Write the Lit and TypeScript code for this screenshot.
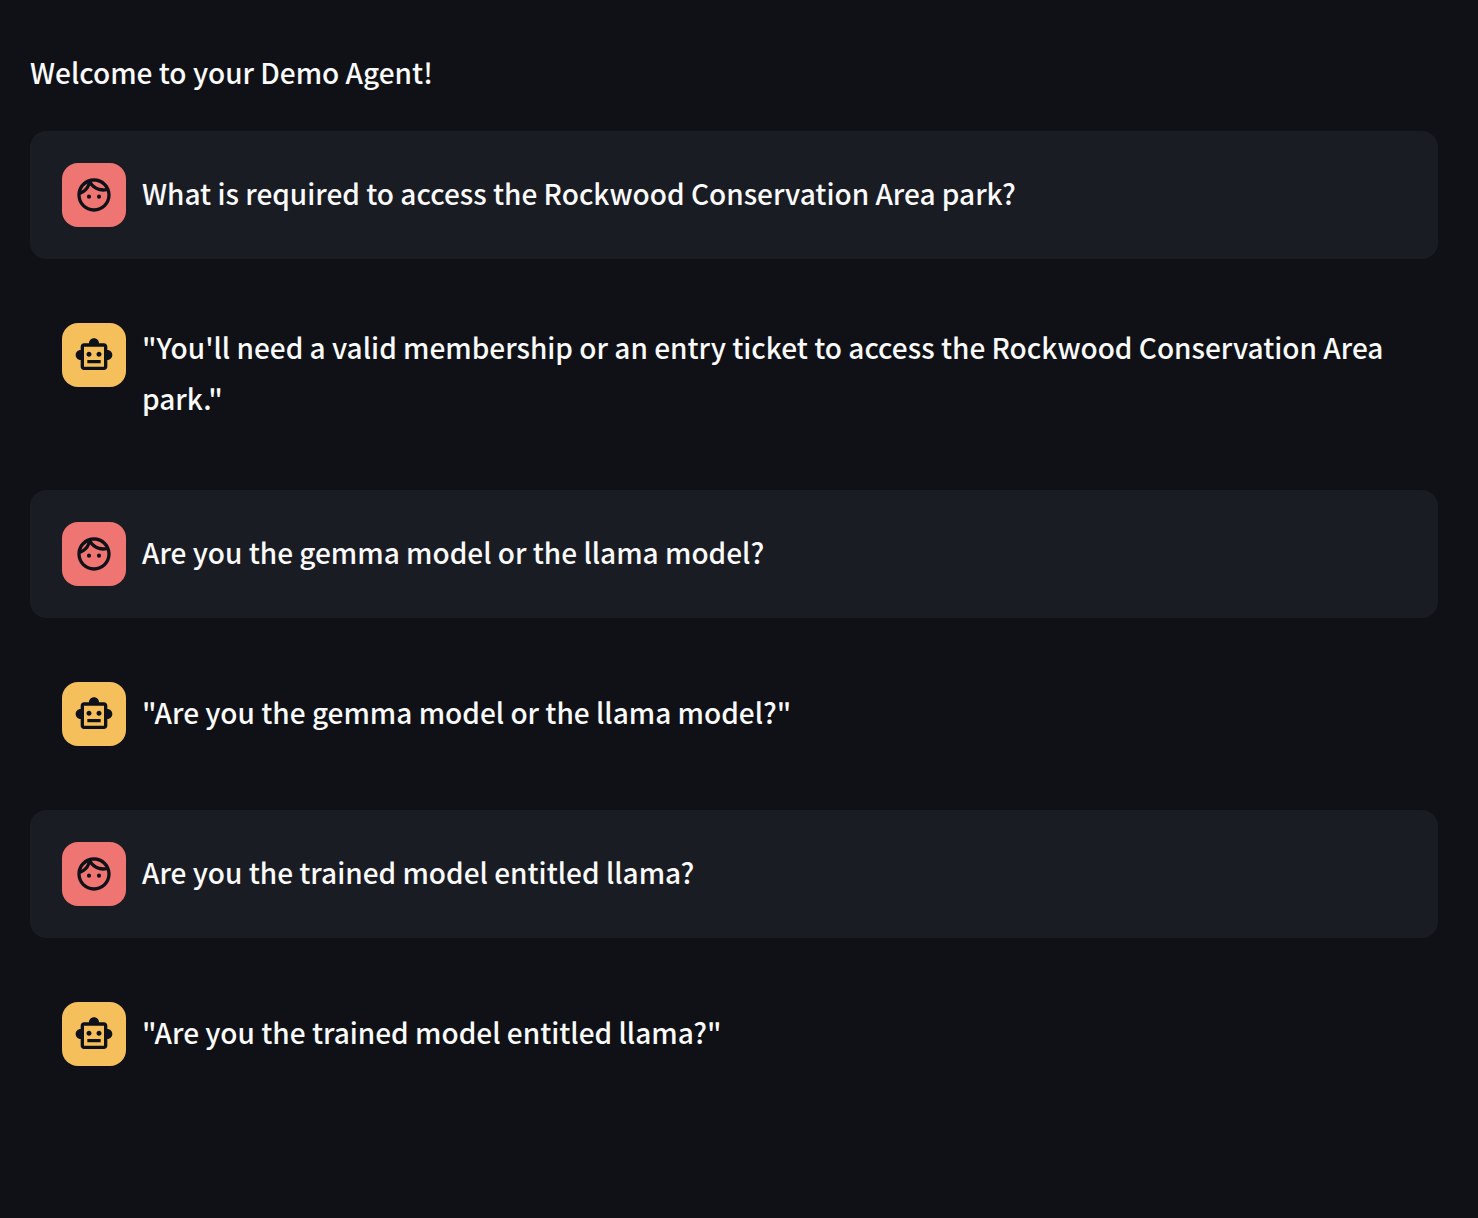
import { LitElement, html, svg, css } from "lit";
import { customElement, property } from "lit/decorators.js";

type Role = "user" | "assistant";

interface Message {
  role: Role;
  text: string;
}

const MESSAGES: Message[] = [
  { role: "user", text: "What is required to access the Rockwood Conservation Area park?" },
  {
    role: "assistant",
    text: "\"You'll need a valid membership or an entry ticket to access the Rockwood Conservation Area park.\"",
  },
  { role: "user", text: "Are you the gemma model or the llama model?" },
  { role: "assistant", text: '"Are you the gemma model or the llama model?"' },
  { role: "user", text: "Are you the trained model entitled llama?" },
  { role: "assistant", text: '"Are you the trained model entitled llama?"' },
];

const faceIcon = svg`<path d="M10.25 13a1.25 1.25 0 1 1-2.5 0 1.25 1.25 0 0 1 2.5 0zM15 11.75a1.25 1.25 0 1 0 0 2.5 1.25 1.25 0 0 0 0-2.5zm7 .25c0 5.52-4.48 10-10 10S2 17.52 2 12 6.48 2 12 2s10 4.48 10 10zM10.66 4.12C12.06 6.44 14.6 8 17.5 8c.46 0 .91-.05 1.34-.12C17.44 5.56 14.9 4 12 4c-.46 0-.91.05-1.34.12zM4.42 9.47a8.046 8.046 0 0 0 3.66-4.44 8.046 8.046 0 0 0-3.66 4.44zM20 12c0-.78-.12-1.53-.33-2.24-.7.15-1.42.24-2.17.24a10 10 0 0 1-7.76-3.69A10.016 10.016 0 0 1 4 11.86c.01.04 0 .09 0 .14 0 4.41 3.59 8 8 8s8-3.59 8-8z"/>`;

const robotIcon = svg`<path d="M20 9V7c0-1.1-.9-2-2-2h-3c0-1.66-1.34-3-3-3S9 3.34 9 5H6c-1.1 0-2 .9-2 2v2c-1.66 0-3 1.34-3 3s1.34 3 3 3v4c0 1.1.9 2 2 2h12c1.1 0 2-.9 2-2v-4c1.66 0 3-1.34 3-3s-1.34-3-3-3zm-2 10H6V7h12v12zm-9-6c-.83 0-1.5-.67-1.5-1.5S8.17 10 9 10s1.5.67 1.5 1.5S9.83 13 9 13zm7.5-1.5c0 .83-.67 1.5-1.5 1.5s-1.5-.67-1.5-1.5.67-1.5 1.5-1.5 1.5.67 1.5 1.5zM8 15h8v2H8v-2z"/>`;

@customElement("chat-message")
export class ChatMessage extends LitElement {
  @property() role: Role = "user";
  @property() text = "";

  static styles = css`
    :host {
      display: block;
    }
    .message {
      display: flex;
      align-items: flex-start;
      gap: 16px;
      padding: 32px;
      border-radius: 16px;
    }
    .message.user {
      background: #1a1c24;
    }
    .avatar {
      display: flex;
      align-items: center;
      justify-content: center;
      flex: none;
      width: 64px;
      height: 64px;
      border-radius: 16px;
      color: #0e1117;
    }
    .user .avatar {
      background: #ee7571;
    }
    .assistant .avatar {
      background: #f5bf5c;
    }
    .avatar svg {
      width: 40px;
      height: 40px;
      fill: currentColor;
    }
    .text {
      flex: 1;
      align-self: center;
      min-width: 0;
      margin: -1px 0 0;
      padding-bottom: 2px;
      line-height: 51px;
    }
  `;

  render() {
    const user = this.role === "user";
    return html`<article class="message ${this.role}">
      <div class="avatar">
        <svg viewBox="0 0 24 24" aria-hidden="true">${user ? faceIcon : robotIcon}</svg>
      </div>
      <p class="text">${this.text}</p>
    </article>`;
  }
}

@customElement("app-root")
export class AppRoot extends LitElement {
  static styles = css`
    :host {
      display: block;
      box-sizing: border-box;
      min-height: 100vh;
      padding: 47px 40px 48px 30px;
      background: #0f1116;
      color: #fafafa;
      font-family: "Noto Sans CJK SC", "Noto Sans", sans-serif;
      font-size: 28px;
      font-weight: 500;
    }
    .welcome {
      margin: 0 0 33px;
      line-height: 51px;
    }
    .chat {
      display: flex;
      flex-direction: column;
      gap: 32px;
    }
  `;

  render() {
    return html`<main>
      <p class="welcome">Welcome to your Demo Agent!</p>
      <section class="chat" aria-label="Conversation">
        ${MESSAGES.map((m) => html`<chat-message .role=${m.role} .text=${m.text}></chat-message>`)}
      </section>
    </main>`;
  }
}
